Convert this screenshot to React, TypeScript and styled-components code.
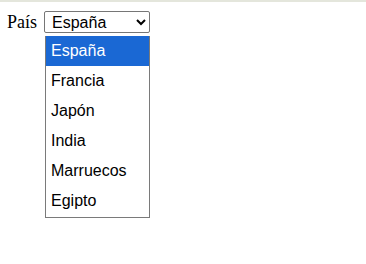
import React from "react";
import styled, { createGlobalStyle } from "styled-components";

const GlobalStyle = createGlobalStyle`
  html {
    border-top: 2px solid #e4e6dc;
    background: #fff;
  }
  body {
    margin: 0;
    padding: 8px;
    box-sizing: border-box;
    min-height: calc(100vh - 2px);
    background: #fff;
    font-family: "Liberation Serif", "Times New Roman", serif;
    font-size: 16px;
  }
`;

const Form = styled.form`
  display: flex;
  align-items: center;
  gap: 7px;
  margin-top: 1px;
`;

const Label = styled.label`
  color: #000;
  font-size: 18px;
  margin-left: -1px;
`;

const Field = styled.div`
  position: relative;
`;

const Select = styled.select`
  display: block;
  width: 106px;
  height: 22px;
  font-family: "Liberation Sans", Arial, sans-serif;
  font-size: 16px;
  color: #000;
  border: 1px solid #767676;
  border-radius: 2px;
  background: #fff;
  padding: 0 3px;
`;

const List = styled.ul`
  position: absolute;
  top: 25px;
  left: 1px;
  width: 105px;
  box-sizing: border-box;
  margin: 0;
  padding: 0 0 1px;
  list-style: none;
  background: #fff;
  border: 1px solid #7a7a7a;
  border-top: none;
`;

const Option = styled.li<{ $active?: boolean }>`
  height: 30px;
  line-height: 30px;
  padding-left: 5px;
  font-family: "Liberation Sans", Arial, sans-serif;
  font-size: 16px;
  color: ${(p) => (p.$active ? "#fff" : "#000")};
  background: ${(p) => (p.$active ? "#1a68d4" : "transparent")};
`;

const paises = ["España", "Francia", "Japón", "India", "Marruecos", "Egipto"];

const App = () => {
  return (
    <>
      <GlobalStyle />
      <Form>
        <Label htmlFor="pais">País</Label>
        <Field>
          <Select id="pais" defaultValue="España">
            {paises.map((p) => (
              <option key={p}>{p}</option>
            ))}
          </Select>
          <List role="listbox">
            {paises.map((p, i) => (
              <Option key={p} $active={i === 0}>
                {p}
              </Option>
            ))}
          </List>
        </Field>
      </Form>
    </>
  );
};

export default App;
